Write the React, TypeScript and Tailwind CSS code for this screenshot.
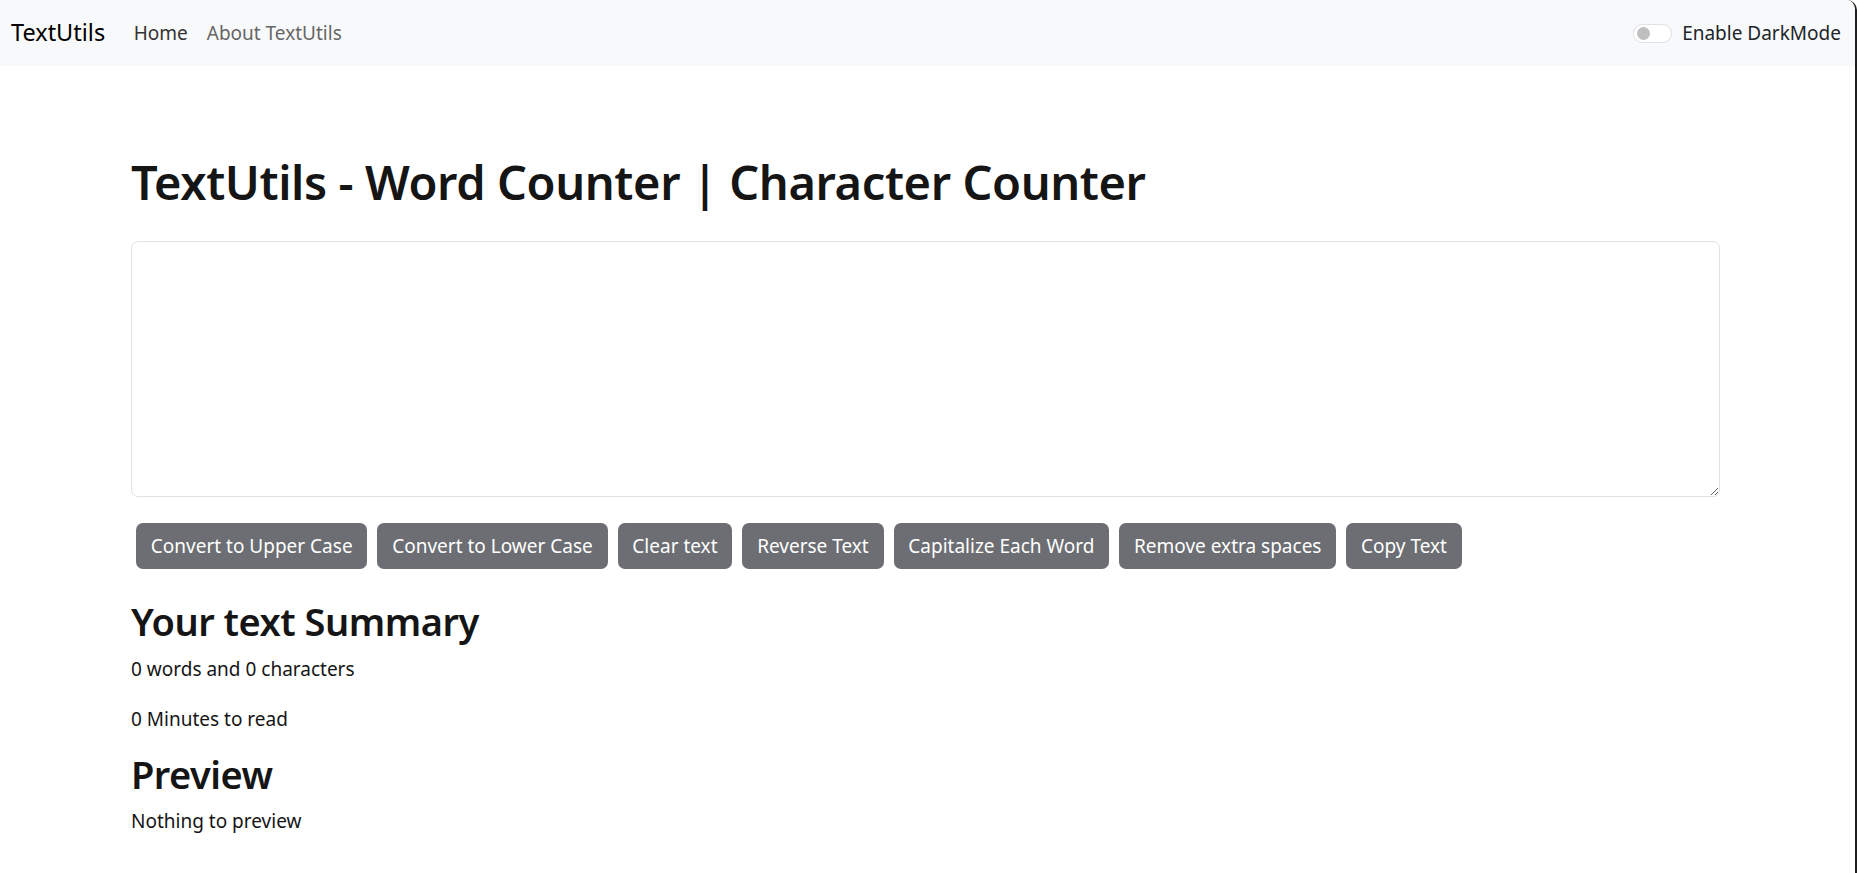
import React from "react";

const actions = [
  "Convert to Upper Case",
  "Convert to Lower Case",
  "Clear text",
  "Reverse Text",
  "Capitalize Each Word",
  "Remove extra spaces",
  "Copy Text",
];

export default function App() {
  return (
    <div className="min-h-screen bg-white text-[#212529] font-['Noto_Sans',sans-serif] text-[19px] leading-[1.5] border-r-2 border-[#1e1e1e] rounded-tr-[10px] overflow-hidden">
      <nav className="h-[66px] bg-[#f8f9fa] flex items-center pl-[11px] pr-[14px]">
        <a href="#" className="text-[23.5px] text-black mr-[19px]">
          TextUtils
        </a>
        <ul className="flex items-center">
          <li>
            <a href="#" className="block px-[9.5px] text-[#333]">
              Home
            </a>
          </li>
          <li>
            <a href="#" className="block px-[9.5px] text-[#666]">
              About TextUtils
            </a>
          </li>
        </ul>
        <div className="ml-auto flex items-center gap-[10px]">
          <span className="w-[39px] h-[19px] rounded-full border border-[#dee2e6] bg-white flex items-center px-[3px]">
            <span className="w-[13px] h-[13px] rounded-full bg-[#bfbfbf]"></span>
          </span>
          <label className="text-[#212529]">Enable DarkMode</label>
        </div>
      </nav>

      <main className="pl-[131px] pr-[135px]">
        <h1 className="mt-[88px] text-[47px] font-semibold tracking-[-0.4px] leading-[1.2] mb-[31px] text-[#151515]">
          TextUtils - Word Counter | Character Counter
        </h1>
        <div className="mb-[19px]">
          <textarea
            className="block w-full h-[256px] border border-[#dee2e6] rounded-[7px] px-[14px] py-[7px] outline-none"
            rows={8}
          ></textarea>
        </div>
        <div className="flex flex-wrap">
          {actions.map((a) => (
            <button
              key={a}
              className="mx-[5px] my-[7px] h-[46px] px-[14.8px] bg-[#6c6e73] text-white rounded-[7px] leading-[1.5]"
            >
              {a}
            </button>
          ))}
        </div>
        <div className="mt-[23px] text-[#151515]">
          <h2 className="text-[38px] font-semibold tracking-[-0.5px] leading-[1.2] mb-[10px]">
            Your text Summary
          </h2>
          <p className="mb-[22px]">0 words and 0 characters</p>
          <p className="mb-[18px]">0 Minutes to read</p>
          <h2 className="text-[38px] font-semibold tracking-[-0.5px] leading-[1.2] mb-[9px]">
            Preview
          </h2>
          <p>Nothing to preview</p>
        </div>
      </main>
    </div>
  );
}
